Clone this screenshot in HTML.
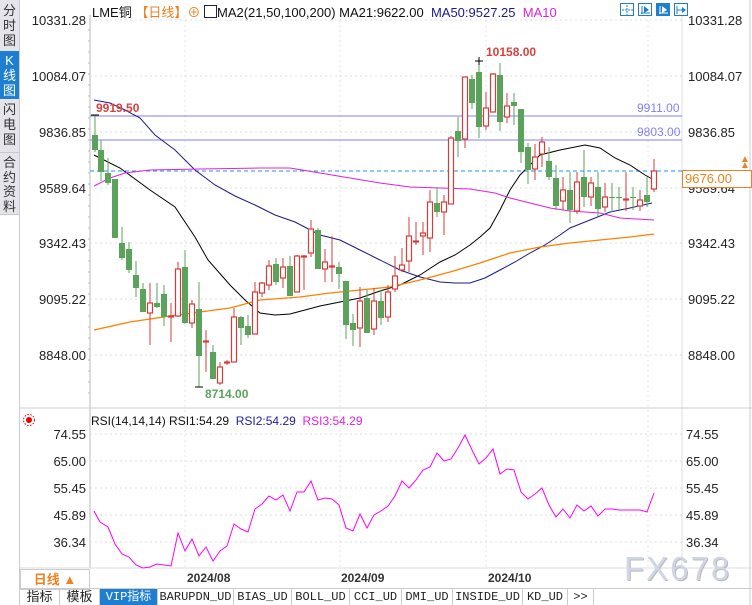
<!DOCTYPE html>
<html><head><meta charset="utf-8"><style>
body{margin:0;width:752px;height:605px;overflow:hidden;background:#fff;font-family:"Liberation Sans","Noto Sans CJK SC",sans-serif;position:relative}
.a{position:absolute;white-space:nowrap}
.side{position:absolute;left:0;width:19px;background:#e4e4ea;color:#333;font-size:13px;line-height:15px;text-align:center;border-bottom:1px solid #c8c8d0}
.tab{position:absolute;top:589px;height:16px;font-size:12px;line-height:16px;border-right:1px solid #ccc;text-align:center;font-family:"Liberation Mono","Noto Sans CJK SC",monospace;color:#222}
</style></head><body>
<div class="side" style="top:0;height:48px;padding-top:3px">分<br>时<br>图</div>
<div class="side" style="top:51px;height:46px;background:#1e7fd0;color:#fff;padding-top:2px">K<br>线<br>图</div>
<div class="side" style="top:99px;height:50px;padding-top:3px">闪<br>电<br>图</div>
<div class="side" style="top:153px;height:58px;padding-top:3px;line-height:14.5px">合<br>约<br>资<br>料</div>
<div style="position:absolute;left:19px;top:0;width:1px;height:605px;background:#ccc"></div>
<svg id="s" width="752" height="605" style="position:absolute;left:0;top:0"></svg>
<div class="a" style="left:92px;top:2px;font-size:13px;color:#111">LME铜 <span style="color:#f08020">【日线】</span><span style="color:#f08020">⊕</span> <span style="display:inline-block;width:11px;height:11px;border:1px solid #224;vertical-align:-1px"></span>MA2(21,50,100,200) <span style="color:#111">MA21:9622.00</span> &nbsp;<span style="color:#1a1a8a">MA50:9527.25</span> &nbsp;<span style="color:#e020e0">MA10</span></div>
<div class="a" style="left:91px;top:414px;font-size:12px;color:#111">RSI(14,14,14) RSI1:54.29 &nbsp;<span style="color:#2020a0">RSI2:54.29</span> &nbsp;<span style="color:#e020e0">RSI3:54.29</span></div>
<div class="a" style="left:96px;top:101px;font-size:12px;color:#d84040;font-weight:bold">9919.50</div>
<div class="a" style="left:486px;top:45px;font-size:12px;color:#d84040;font-weight:bold">10158.00</div>
<div class="a" style="left:205px;top:387px;font-size:12px;color:#5ba35b;font-weight:bold">8714.00</div>
<div class="a" style="left:637px;top:101px;font-size:12px;color:#8080ff">9911.00</div>
<div class="a" style="left:637px;top:125px;font-size:12px;color:#8080ff">9803.00</div>
<div class="a" style="left:682px;top:170px;width:66px;height:16px;border:1px solid #f08020;background:#fff;color:#f08020;font-size:13px;line-height:16px;padding-left:2px">9676.00</div>
<div class="a" style="left:740px;top:157px;color:#f08020;font-size:10px;line-height:6px">▲<br>▲</div>
<div class="a" style="left:20px;top:569px;width:68px;height:19px;border:1px solid #ccc;color:#f08020;font-weight:bold;font-size:13px;line-height:19px;text-align:center">日线 ▲</div>
<div class="a" style="left:187px;top:571px;font-size:12px;font-weight:bold;color:#333">2024/08</div>
<div class="a" style="left:341px;top:571px;font-size:12px;font-weight:bold;color:#333">2024/09</div>
<div class="a" style="left:488px;top:571px;font-size:12px;font-weight:bold;color:#333">2024/10</div>
<div class="a" style="left:624px;top:550px;font-size:33px;color:#d0d6e2;letter-spacing:2px;text-shadow:1px 1px 0 #b8bcc4">FX678</div>
<div style="position:absolute;left:19px;top:588px;width:733px;height:1px;background:#ccc"></div>
<div class="tab" style="left:20px;width:39px;font-family:'Liberation Sans','Noto Sans CJK SC',sans-serif;font-size:13px">指标</div>
<div class="tab" style="left:60px;width:39px;font-family:'Liberation Sans','Noto Sans CJK SC',sans-serif;font-size:13px">模板</div>
<div class="tab" style="left:100px;width:57px;background:#1e7fd0;color:#fff">VIP指标</div>
<div class="tab" style="left:158px;width:75px">BARUPDN_UD</div>
<div class="tab" style="left:234px;width:57px">BIAS_UD</div>
<div class="tab" style="left:292px;width:57px">BOLL_UD</div>
<div class="tab" style="left:350px;width:51px">CCI_UD</div>
<div class="tab" style="left:402px;width:50px">DMI_UD</div>
<div class="tab" style="left:453px;width:69px">INSIDE_UD</div>
<div class="tab" style="left:523px;width:44px">KD_UD</div>
<div class="tab" style="left:568px;width:25px">&gt;&gt;</div>
<script>
const s=document.getElementById('s');let h='';
const L=(x1,y1,x2,y2,c,w,d)=>h+=`<line x1="${x1}" y1="${y1}" x2="${x2}" y2="${y2}" stroke="${c}" stroke-width="${w||1}" ${d?`stroke-dasharray="${d}"`:''} shape-rendering="crispEdges"/>`;
const T=(x,y,t,a)=>h+=`<text x="${x}" y="${y}" font-size="13" fill="#222" text-anchor="${a}" font-family="Liberation Sans">${t}</text>`;
L(90,15,90,568,'#bbb');L(682,15,682,568,'#ddd');L(750,0,750,605,'#ccc');
L(20,408,752,408,'#ccc');L(20,568,752,568,'#ddd');
const pl=[[20,'10331.28'],[76,'10084.07'],[132,'9836.85'],[188,'9589.64'],[243,'9342.43'],[299,'9095.22'],[355,'8848.00']];
pl.forEach(([y,t])=>{L(90,y,682,y,'#ddd',1,'2,3');T(86,y+5,t,'end');T(688,y+5,t,'start');});
[[434,'74.55'],[461,'65.00'],[488,'55.45'],[515,'45.89'],[542,'36.34']].forEach(([y,t])=>{L(90,y,682,y,'#ddd',1,'2,3');T(86,y+5,t,'end');T(686,y+5,t,'start');});
[185,340,486,648].forEach(x=>L(x,15,x,568,'#e4e4e4',1,'2,3'));
for(let y=30;y<400;y+=11){L(88,y,90,y,'#bbb')}
L(90,116,682,116,'#8080ff');L(90,140,682,140,'#8080ff');L(90,171,682,171,'#1e90ff',1,'4,3');
const pts=(a,c,w)=>h+=`<polyline points="${a.map(p=>p.join(',')).join(' ')}" fill="none" stroke="${c}" stroke-width="${w||1}"/>`;
pts([[94,155],[120,168],[150,190],[175,207],[195,237],[208,260],[230,285],[245,300],[260,313],[275,315],[290,314],[305,310],[320,306],[340,302],[360,298],[380,291],[400,285],[420,275],[440,262],[455,255],[470,245],[480,237],[490,228],[500,210],[510,190],[520,175],[540,155],[560,150],[585,145],[600,148],[615,158],[630,165],[645,175],[654,180]],'#000');
pts([[94,100],[110,103],[125,110],[140,118],[155,135],[175,150],[195,170],[215,185],[235,196],[255,205],[275,215],[295,222],[320,235],[340,240],[360,250],[380,260],[400,270],[420,277],[440,282],[455,283],[470,283],[485,278],[500,270],[515,262],[530,253],[545,245],[560,235],[570,228],[590,220],[610,212],[630,208],[652,203]],'#1a1a8a');
pts([[94,186],[110,178],[125,173],[150,170],[200,169],[260,168],[290,168],[320,173],[350,178],[380,183],[410,187],[440,188],[470,189],[495,193],[510,198],[530,203],[550,208],[570,211],[600,213],[620,218],[654,220]],'#e020e0');
pts([[94,330],[130,322],[170,316],[200,312],[230,308],[260,300],[300,297],[330,293],[360,290],[390,287],[420,280],[450,272],[480,263],[510,253],[540,247],[570,243],[600,240],[630,237],[654,234]],'#ff8000',1.3);
const C=[[95,135,150,115,152,0],[101,150,172,140,181,0],[108,173,183,158,185,0],[115,179,238,179,238,0],[122,243,258,227,260,0],[129,249,270,242,273,0],[136,275,288,261,297,0],[143,289,312,283,312,0],[150,303,313,283,345,1],[157,303,307,283,308,0],[164,294,317,285,326,0],[171,316,317,303,342,1],[178,269,316,262,317,1],[185,267,323,250,324,0],[192,304,323,300,328,1],[199,309,356,282,387,0],[206,341,342,330,372,1],[213,352,379,345,379,0],[220,367,383,362,385,1],[227,362,363,360,365,1],[234,317,362,308,362,1],[241,317,328,316,345,0],[248,326,335,315,338,0],[255,292,334,282,334,1],[262,283,293,282,297,1],[269,266,285,260,290,1],[276,264,282,258,285,0],[283,267,278,258,288,1],[290,266,296,256,296,0],[297,256,292,255,292,1],[304,256,257,255,290,1],[311,229,253,220,257,1],[318,230,269,228,269,0],[325,262,269,249,282,1],[332,266,267,236,282,1],[339,267,274,262,289,0],[346,281,325,281,339,0],[353,323,330,314,346,0],[360,301,328,287,347,1],[367,298,333,290,333,0],[374,301,329,288,335,1],[381,301,318,290,325,0],[388,292,317,285,322,1],[395,276,289,256,292,1],[402,265,270,248,272,1],[409,236,261,217,272,1],[416,241,242,222,245,1],[423,233,236,222,255,1],[430,202,238,190,252,1],[437,203,212,187,217,0],[444,202,212,195,235,1],[451,138,204,136,204,1],[458,131,141,117,157,0],[465,77,139,77,148,1],[472,79,103,75,109,0],[479,72,127,61,138,0],[486,108,126,92,130,1],[493,74,112,73,112,1],[500,75,122,63,131,0],[507,106,117,93,123,1],[514,102,106,93,125,0],[521,109,152,109,163,0],[528,147,170,143,184,0],[535,157,169,144,180,1],[542,142,154,137,167,1],[549,161,177,147,180,0],[556,178,206,165,210,0],[563,190,201,177,210,1],[570,190,210,172,223,0],[577,182,211,172,214,1],[584,177,197,150,207,0],[591,183,197,177,206,1],[598,187,209,172,216,0],[605,197,207,183,212,1],[612,197,198,183,212,0],[619,197,198,187,210,0],[626,199,200,172,211,1],[633,197,198,187,210,0],[640,200,206,190,211,1],[647,195,202,177,207,0],[654,171,189,159,192,1]];
C.forEach(([x,t,b,hi,lo,r])=>{const c=r?'#d43c3c':'#5ba35b';L(x,hi,x,lo,c);
if(r)h+=`<rect x="${x-2.5}" y="${t}" width="5" height="${Math.max(b-t,1)}" fill="#fff" stroke="${c}" stroke-width="1.2"/>`;
else h+=`<rect x="${x-3}" y="${t}" width="6" height="${Math.max(b-t,1)}" fill="${c}"/>`;});
L(91,115,99,115,'#000');L(475,61,483,61,'#000');L(479,57,479,65,'#000');L(195,387,203,387,'#000');
pts([[94,511],[100,522],[108,527],[115,544],[122,554],[129,557],[136,565],[143,568],[150,567],[157,564],[164,565],[171,566],[178,533],[185,551],[192,539],[199,556],[206,547],[213,561],[220,551],[227,546],[234,524],[241,529],[248,532],[255,509],[262,504],[269,496],[276,500],[283,495],[290,511],[297,492],[304,492],[311,481],[318,500],[325,498],[332,499],[339,505],[346,528],[353,531],[360,514],[367,528],[374,515],[381,511],[388,506],[395,496],[402,481],[409,488],[416,480],[423,470],[430,467],[437,453],[444,461],[451,459],[458,448],[465,435],[472,450],[479,464],[486,458],[493,449],[500,474],[507,469],[514,470],[521,492],[528,499],[535,494],[542,488],[549,505],[556,517],[563,509],[570,518],[577,505],[584,511],[591,506],[598,516],[605,509],[612,509],[619,510],[626,510],[633,510],[640,510],[647,512],[654,493]],'#f0f');
h+=`<circle cx="29" cy="420" r="3" fill="#e00"/><circle cx="29" cy="420" r="5.5" fill="none" stroke="#e00" stroke-dasharray="1.5,1.5"/>`;
[620,638,656,674].forEach((x,i)=>{h+=`<rect x="${x}.5" y="3.5" width="13" height="12" fill="${i==2?'#1e7fd0':'#fff'}" stroke="#1e7fd0"/>`;
const c=i==2?'#fff':'#1e7fd0';
if(i==0){L(x+7,5,x+7,15,c,1,'2,1');L(x+2,10,x+13,10,c,1,'2,1');}
else if(i==3){L(x+3,6,x+3,14,c);L(x+3,10,x+11,10,c);h+=`<path d="M${x+8} 7 L${x+12} 10 L${x+8} 13Z" fill="${c}"/>`;}
else{L(x+4,6,x+4,14,c);L(x+3,13,x+12,13,c);h+=`<path d="M${x+6} 6 L${x+11} 10 L${x+6} 13Z" fill="${c}"/>`;}});
s.innerHTML=h;
</script>
</body></html>
